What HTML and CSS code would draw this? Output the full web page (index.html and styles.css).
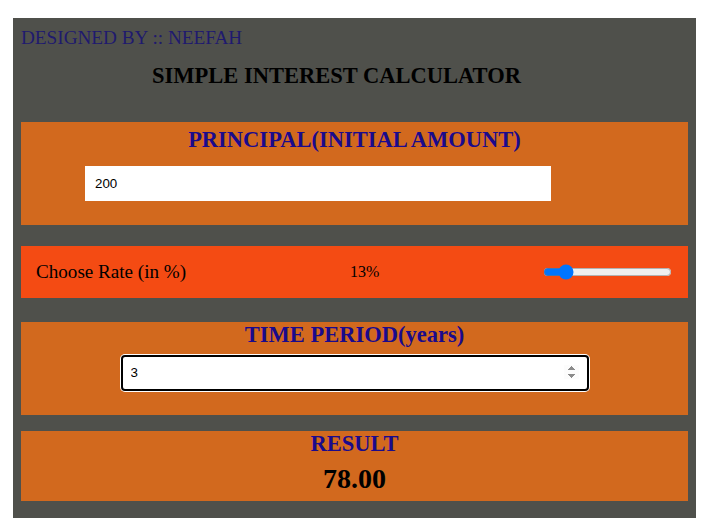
FILE: index.html
```html
<!DOCTYPE html>
<html lang="en">
<head>
<meta charset="utf-8">
<title>Simple Interest Calculator</title>
<link rel="stylesheet" href="styles.css">
</head>
<body>
<div class="app">
  <p class="credit">DESIGNED BY :: NEEFAH</p>
  <h1 class="title">SIMPLE INTEREST CALCULATOR</h1>
  <section class="card card-principal">
    <h2 class="card-heading">PRINCIPAL(INITIAL AMOUNT)</h2>
    <input class="principal-input" type="text" value="200">
  </section>
  <section class="rate-row">
    <label class="rate-label" for="rate">Choose Rate (in %)</label>
    <span class="rate-value">13%</span>
    <input class="rate-range" id="rate" type="range" min="0" max="100" value="13">
  </section>
  <section class="card card-time">
    <h2 class="card-heading">TIME PERIOD(years)</h2>
    <input class="time-input" type="number" value="3" autofocus>
  </section>
  <section class="card card-result">
    <h2 class="card-heading">RESULT</h2>
    <div class="result-value">78.00</div>
  </section>
</div>
</body>
</html>
```

FILE: styles.css
```css
html, body {
  margin: 0;
  padding: 0;
  background: #ffffff;
}

body {
  font-family: "Liberation Serif", "Times New Roman", serif;
}

.app {
  box-sizing: border-box;
  margin: 18px 0 0 13px;
  width: 683px;
  height: 500px;
  padding: 10px 8px 0;
  background: #4f504b;
  display: flow-root;
}

.credit {
  margin: 0;
  font-size: 19.2px;
  line-height: 1;
  color: #1f1a6e;
}

.title {
  margin: 18px 0 0;
  padding-right: 36px;
  font-size: 22.5px;
  line-height: 1;
  text-align: center;
  color: #000000;
}

.card {
  background: #d2691e;
  text-align: center;
}

.card-heading {
  margin: 0;
  font-size: 22.5px;
  line-height: 1;
  font-weight: bold;
  color: #1a0a8c;
}

.card-principal {
  margin-top: 34px;
  padding: 7px 0 24px;
  text-align: left;
}

.card-principal .card-heading {
  text-align: center;
}

.principal-input {
  display: block;
  box-sizing: border-box;
  margin: 14.5px 0 0 64px;
  width: 466px;
  height: 35px;
  padding: 0 10px;
  border: none;
  outline: none;
  background: #ffffff;
  font-family: "Liberation Sans", Arial, sans-serif;
  font-size: 13.33px;
  color: #000000;
}

.rate-row {
  margin-top: 21px;
  height: 52px;
  padding: 0 16px 0 15px;
  display: flex;
  align-items: center;
  justify-content: space-between;
  background: #f44b13;
}

.rate-label {
  font-size: 19.1px;
  color: #000000;
}

.rate-value {
  font-size: 16px;
  color: #000000;
}

.rate-range {
  width: 129px;
  margin: 0;
}

.card-time {
  margin-top: 24px;
  padding: 2px 0 24px;
}

.time-input {
  display: block;
  box-sizing: border-box;
  margin: 8.5px auto 0;
  width: 468px;
  height: 36px;
  padding: 0 8px;
  border: 2px solid #000000;
  border-radius: 4px;
  box-shadow: 0 0 0 1px #ffffff;
  outline: none;
  background: #ffffff;
  font-family: "Liberation Sans", Arial, sans-serif;
  font-size: 13.33px;
  color: #000000;
}

.card-result {
  margin-top: 16px;
  padding: 2px 0 8px;
}

.result-value {
  margin-top: 9.5px;
  font-size: 28px;
  line-height: 1;
  font-weight: bold;
  color: #000000;
}
```
